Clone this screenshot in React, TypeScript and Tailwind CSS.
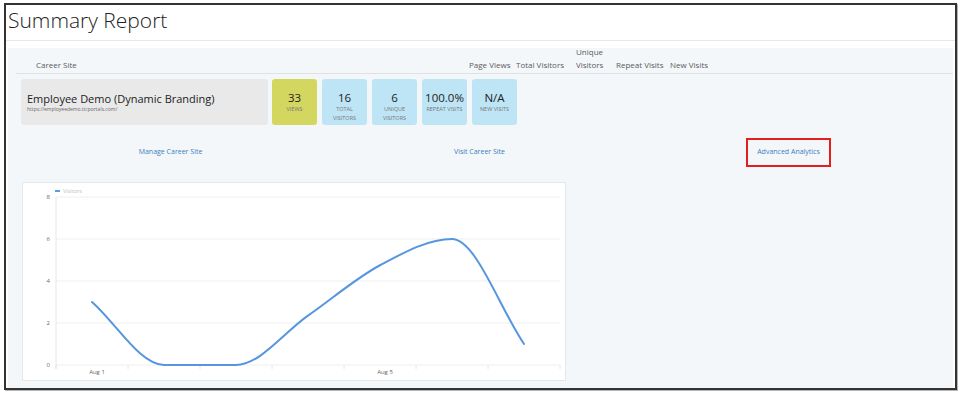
import React from 'react';

const points = [3, 0, 0, 2.35, 4.75, 6, 1];

// chart geometry (svg coords)
const plotLeft = 33;
const plotRight = 537;
const plotTop = 14;
const plotBottom = 182;
const unit = 21;
const step = 72;

const px = (i: number) => plotLeft + step / 2 + step * i;
const py = (v: number) => plotBottom - unit * v;

// monotone cubic path, like chart.js 'monotone'
const monotonePath = (vals: number[]) => {
  const n = vals.length;
  const xs = vals.map((_, i) => px(i));
  const ys = vals.map((v) => py(v));
  const d: number[] = [];
  for (let i = 0; i < n - 1; i++) d.push((ys[i + 1] - ys[i]) / (xs[i + 1] - xs[i]));
  const m: number[] = new Array(n).fill(0);
  m[0] = d[0];
  m[n - 1] = d[n - 2];
  for (let i = 1; i < n - 1; i++) {
    m[i] = d[i - 1] * d[i] <= 0 ? 0 : (d[i - 1] + d[i]) / 2;
  }
  for (let i = 0; i < n - 1; i++) {
    if (d[i] === 0) {
      m[i] = 0;
      m[i + 1] = 0;
      continue;
    }
    const a = m[i] / d[i];
    const b = m[i + 1] / d[i];
    const s = a * a + b * b;
    if (s > 9) {
      const t = 3 / Math.sqrt(s);
      m[i] = t * a * d[i];
      m[i + 1] = t * b * d[i];
    }
  }
  let path = `M${xs[0]},${ys[0]}`;
  for (let i = 0; i < n - 1; i++) {
    const h = (xs[i + 1] - xs[i]) / 3;
    path += ` C${xs[i] + h},${ys[i] + m[i] * h} ${xs[i + 1] - h},${ys[i + 1] - m[i + 1] * h} ${xs[i + 1]},${ys[i + 1]}`;
  }
  return path;
};

const stats = [
  { value: '33', label: ['VIEWS'], bg: 'bg-[#d3d65f]' },
  { value: '16', label: ['TOTAL', 'VISITORS'], bg: 'bg-[#bee5f6]' },
  { value: '6', label: ['UNIQUE', 'VISITORS'], bg: 'bg-[#bee5f6]' },
  { value: '100.0%', label: ['REPEAT VISITS'], bg: 'bg-[#bee5f6]' },
  { value: 'N/A', label: ['NEW VISITS'], bg: 'bg-[#bee5f6]' },
];

const VisitorsChart = () => {
  const font = "'Open Sans', sans-serif";
  return (
    <svg width={542} height={197} className="block">
      {/* legend */}
      <line x1={32} y1={8} x2={37} y2={8} stroke="#5b9be0" strokeWidth={2} />
      <text x={40} y={10} fontSize={5.5} fill="#c0c0c0" fontFamily={font}>
        Visitors
      </text>

      {/* grid */}
      {[0, 2, 4, 6, 8].map((v) => (
        <g key={v}>
          <line x1={plotLeft} y1={py(v)} x2={plotRight} y2={py(v)} stroke="#efefef" strokeWidth={1} />
          <text x={27} y={py(v) + 2} fontSize={6} fill="#666" textAnchor="end" fontFamily={font}>
            {v}
          </text>
        </g>
      ))}
      <line x1={plotLeft} y1={plotTop} x2={plotLeft} y2={plotBottom + 4} stroke="#e6e6e6" strokeWidth={1} />
      {Array.from({ length: 8 }).map((_, k) => (
        <line
          key={k}
          x1={plotLeft + step * k}
          y1={plotBottom}
          x2={plotLeft + step * k}
          y2={plotBottom + 4}
          stroke="#e6e6e6"
          strokeWidth={1}
        />
      ))}
      <text x={74} y={191} fontSize={6} fill="#666" textAnchor="middle" fontFamily={font}>
        Aug 1
      </text>
      <text x={362} y={191} fontSize={6} fill="#666" textAnchor="middle" fontFamily={font}>
        Aug 5
      </text>

      <path d={monotonePath(points)} fill="none" stroke="#5596df" strokeWidth={2} strokeLinecap="round" />
    </svg>
  );
};

const App = () => {
  return (
    <div className="w-[964px] h-[394px] bg-white pt-[3px] pl-[4px] font-['Open_Sans',sans-serif]">
      <div className="w-[953px] h-[387px] border-2 border-[#333] shadow-[1px_1px_0_#b5b5b5] flex flex-col">
        {/* title */}
        <div className="h-[36px] border-b border-[#e8e8e8] pl-[2px]">
          <h1 className="text-[21px] leading-[30px] font-light text-[#222]">Summary Report</h1>
        </div>

        {/* panel */}
        <div className="flex-1 mt-[7px] mx-[2px] bg-[#f4f7fa] flex flex-col">
          {/* table header */}
          <div className="ml-[8px] h-[26px] border-b border-[#dfe2e5] flex items-end pb-[2px] text-[8px] leading-[13px] text-[#5a5a5a]">
            <div className="w-[453px] pl-[20px]">Career Site</div>
            <div className="w-[47px]">Page Views</div>
            <div className="w-[60px]">Total Visitors</div>
            <div className="w-[40px]">
              Unique
              <br />
              Visitors
            </div>
            <div className="w-[54px]">Repeat Visits</div>
            <div>New Visits</div>
          </div>

          {/* site row */}
          <div className="mt-[5px] ml-[13px] flex h-[46px]">
            <div className="w-[247px] rounded-[3px] bg-[#e9e9e9] flex flex-col justify-center pl-[6px]">
              <div className="text-[11px] leading-[14px] text-[#222]">Employee Demo (Dynamic Branding)</div>
              <div className="text-[5px] leading-[7px] text-[#666]">https://employeedemo.ttcportals.com/</div>
            </div>
            <div className="ml-[4px] flex gap-[5px]">
              {stats.map((s) => (
                <div key={s.value} className={`w-[45px] rounded-[3px] ${s.bg} flex flex-col items-center pt-[11px]`}>
                  <div className="text-[11.5px] leading-[15px] text-[#222]">{s.value}</div>
                  {s.label.map((l) => (
                    <div key={l} className="text-[5.5px] leading-[8.5px] text-[#777] whitespace-nowrap">
                      {l}
                    </div>
                  ))}
                </div>
              ))}
            </div>
          </div>

          {/* links */}
          <div className="mt-[13px] h-[29px] pl-[8px] pr-[10px] grid grid-cols-3 items-center justify-items-center text-[7px] text-[#3b7dc0]">
            <a href="#">Manage Career Site</a>
            <a href="#">Visit Career Site</a>
            <div className="h-full border-2 border-[#e41d1d] px-[9px] flex items-center">
              <a href="#">Advanced Analytics</a>
            </div>
          </div>

          {/* chart */}
          <div className="mt-[15px] ml-[14px] w-[544px] h-[199px] border border-[#e3e8ec] bg-white">
            <VisitorsChart />
          </div>
        </div>
      </div>
    </div>
  );
};

export default App;
